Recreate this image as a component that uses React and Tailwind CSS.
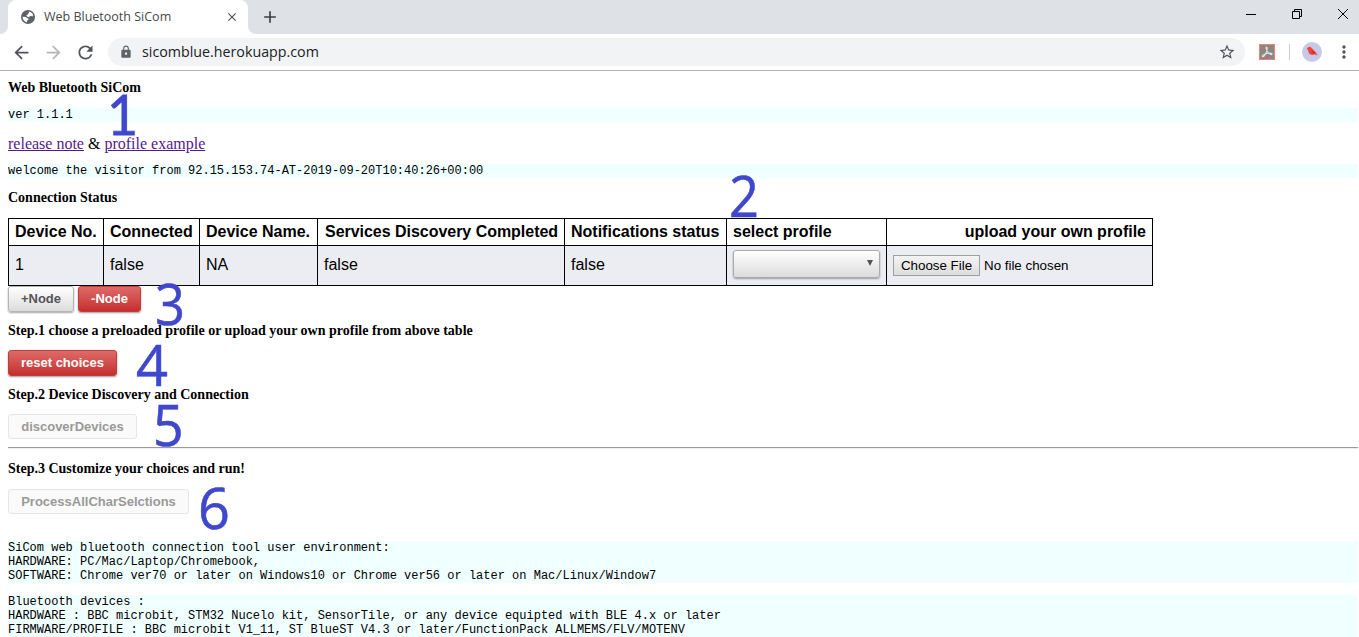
import React from "react";
import { MdArrowBack, MdArrowForward, MdRefresh, MdLock, MdStarBorder, MdMoreVert, MdClose, MdAdd } from "react-icons/md";

const ui = "font-['Open_Sans','Noto_Sans',sans-serif]";
const pre = "bg-[#f0ffff] font-['Liberation_Mono',monospace] text-[12px] leading-[14px] text-black whitespace-pre";
const heading = "h-[16px] pt-px text-[14px] leading-[16px] font-bold";
const redBtn =
  "rounded-[3px] border border-[#c43c35] bg-linear-to-b from-[#dd6a6a] to-[#c42d2d] pb-[2px] text-white font-bold shadow-[0_1px_2px_rgba(0,0,0,0.4)] text-[13px] leading-none";
const offBtn =
  "h-[25px] rounded-[3px] border border-[#e6e6e6] bg-[#fafafa] text-[#999999] font-bold text-[13px] leading-none";

function Globe() {
  return (
    <svg width="14" height="14" viewBox="0 0 14 14" className="shrink-0">
      <circle cx="7" cy="7" r="7" fill="#5f6368" />
      <path d="M7.8 1.6C9.8 1.8 11.6 3.300 12.200 5.100L11.300 6.600L9.800 5.800L8.600 6.200L8.200 7.200L6.400 6.800L5.300 5.600L6.200 4.800L6.800 4.900L6.800 3.700L8 3.100Z" fill="#fff" />
      <path d="M1.500 6.700L4.900 7.100L6.300 8.300L7.600 8.600L7.200 10.100L6.100 10.600L5.900 12.300C3.500 11.800 1.600 9.700 1.500 6.700Z" fill="#fff" />
    </svg>
  );
}

function Browser() {
  return (
    <header className={`${ui} h-[71px] border-b border-[#b0b0b0] bg-white`}>
      <div className="flex h-[34px] bg-[#dee1e6]">
        <div className="flex w-2 items-end bg-white">
          <div className="h-[34px] w-2 rounded-br-lg bg-[#dee1e6]" />
        </div>
        <div className="bg-white">
          <div className="h-[34px] bg-[#dee1e6]">
            <div className="flex h-[34px] w-[240px] items-center rounded-t-lg bg-white pl-[13px] pr-[9px]">
              <Globe />
              <span className="ml-[9px] flex-1 pt-px whitespace-nowrap text-[12.5px] text-[#45494d]">Web Bluetooth SiCom</span>
              <MdClose size={14} className="text-[#4f5358]" />
            </div>
          </div>
        </div>
        <div className="flex w-2 bg-white">
          <div className="h-[34px] w-2 rounded-bl-lg bg-[#dee1e6]" />
        </div>
        <div className="flex w-7 items-center justify-center">
          <MdAdd size={20} className="text-[#3c4043]" />
        </div>
        <div className="ml-auto flex">
          <div className="flex w-[46px] justify-center pt-[14px]">
            <div className="h-px w-[10px] bg-black" />
          </div>
          <div className="flex w-[46px] justify-center pt-[9px]">
            <svg width="10" height="10" viewBox="0 0 10 10" fill="none" stroke="#000">
              <path d="M.5 2.500h7v7h-7zM2.500 2.500v-2h7v7h-2" />
            </svg>
          </div>
          <div className="flex w-[39px] pt-[9px] pl-[18px]">
            <svg width="10" height="10" viewBox="0 0 10 10" fill="none" stroke="#000">
              <path d="M0 0L10 10M10 0L0 10" />
            </svg>
          </div>
        </div>
      </div>
      <div className="flex h-[36px] items-center bg-white">
        <MdArrowBack size={21} className="ml-[11px] text-[#505459]" />
        <MdArrowForward size={21} className="ml-[11px] text-[#b4b6b8]" />
        <MdRefresh size={21} className="ml-[11px] text-[#505459]" />
        <div className="ml-3 flex h-7 w-[1137px] items-center rounded-full bg-[#f1f3f4]">
          <MdLock size={14} className="ml-[11px] text-[#5f6368]" />
          <span className="ml-[9px] whitespace-nowrap text-[14.25px] text-[#202124]">sicomblue.herokuapp.com</span>
          <MdStarBorder size={18} className="ml-auto mr-[9px] text-[#505459]" />
        </div>
        <svg width="16" height="16" viewBox="0 0 16 16" className="ml-[14px]">
          <rect x=".5" y=".5" width="15" height="15" fill="#8c8583" stroke="#ef8470" />
          <path d="M7.500 3c1.300 0 .5 3.600-.6 6.200-1 2.100-2.500 3.900-3.400 3.300-1-.9 2.600-3 5.500-3.400 2.500-.3 4.400.3 4 1.200-.6 1-3.400-.8-4.700-3C7.300 5.500 6.600 3 7.500 3z" fill="none" stroke="#e4e2e1" strokeWidth="1.100" />
        </svg>
        <div className="ml-[14px] h-4 w-px bg-[#c8cacd]" />
        <svg width="20" height="20" viewBox="0 0 20 20" className="ml-3">
          <circle cx="10" cy="10" r="10" fill="#c5cae9" />
          <path d="M4.500 7.200L6 5.200Q8 4.200 10 6.200L14 10.500L15.500 13.500L12.500 12.300L11 13Q6.800 13 6.200 9L5.900 7.600Z" fill="#f44336" />
          <path d="M9.500 8L13.500 11.600L11 11.200Z" fill="#b71c3c" />
        </svg>
        <MdMoreVert size={20} className="ml-3 text-[#505459]" />
      </div>
    </header>
  );
}

const th = "border-r border-b border-black p-0 px-[6px] text-left align-middle";
const td = "border-r border-b border-black bg-[#ecedf2] p-0 px-[6px] pb-[2px] align-middle";

function StatusTable() {
  return (
    <table className="w-[1145px] table-fixed border-separate border-spacing-0 border-t border-l border-black font-['Liberation_Sans',Arial,sans-serif] text-[16px] leading-[18px] whitespace-nowrap">
      <colgroup>
        <col className="w-[95px]" />
        <col className="w-[96px]" />
        <col className="w-[118px]" />
        <col className="w-[247px]" />
        <col className="w-[162px]" />
        <col className="w-[160px]" />
        <col className="w-[266px]" />
      </colgroup>
      <thead>
        <tr className="h-[27px]">
          <th className={th}>Device No.</th>
          <th className={th}>Connected</th>
          <th className={th}>Device Name.</th>
          <th className={`${th} pl-[7px] tracking-[-0.03px]`}>Services Discovery Completed</th>
          <th className={th}>Notifications status</th>
          <th className={th}>select profile</th>
          <th className="border-r border-b border-black p-0 px-[6px] text-right align-middle">upload your own profile</th>
        </tr>
      </thead>
      <tbody>
        <tr className="h-[40px]">
          <td className={td}>1</td>
          <td className={td}>false</td>
          <td className={td}>NA</td>
          <td className={td}>false</td>
          <td className={td}>false</td>
          <td className="border-r border-b border-black bg-[#ecedf2] p-0 px-[6px] pb-[3px] align-middle">
            <div className="flex h-[28px] w-[147px] items-start justify-end rounded-[3px] border border-[#aaa] bg-linear-to-b from-white to-[#dcdcdc] pt-[9px] pr-[6px] shadow-[0_1px_2px_rgba(0,0,0,0.35)]">
              <svg width="6" height="6" viewBox="0 0 6 6"><path d="M0 0h6L3 6z" fill="#555" /></svg>
            </div>
          </td>
          <td className="border-r border-b border-black bg-[#ecedf2] p-0 px-[6px] align-middle">
            <div className="flex h-[21px] items-center text-[13.333px] leading-[15px]">
              <button className="h-[21px] w-[87px] border border-[#a0a0a0] bg-linear-to-b from-[#f4f4f4] to-[#dddddd]">Choose File</button>
              <span className="ml-1">No file chosen</span>
            </div>
          </td>
        </tr>
      </tbody>
    </table>
  );
}

function Mark({ className, children }) {
  return (
    <span className={`absolute origin-left text-[57px] leading-[57px] text-[#3f48cc] ${className}`}>{children}</span>
  );
}

export default function App() {
  return (
    <div className="relative h-[637px] w-[1359px] overflow-hidden bg-white font-['Liberation_Serif',serif] text-black">
      <Browser />
      <main className="pr-px pl-2">
        <h1 className={`${heading} mt-[8px]`}>Web Bluetooth SiCom</h1>
        <pre className={`${pre} mt-[13px]`}>ver 1.1.1</pre>
        <p className="mt-3 h-[18px] pt-px text-[16px] leading-[18px]">
          <a className="text-[#551a8b] underline">release note</a> &amp; <a className="text-[#551a8b] underline">profile example</a>
        </p>
        <pre className={`${pre} mt-3`}>welcome the visitor from 92.15.153.74-AT-2019-09-20T10:40:26+00:00</pre>
        <h2 className={`${heading} mt-[11px] mb-[13px]`}>Connection Status</h2>
        <StatusTable />
        <div className="flex gap-1 font-['Liberation_Sans',Arial,sans-serif]">
          <button className="h-[26px] w-[66px] rounded-[3px] border border-[#b5b5b5] bg-linear-to-b from-white to-[#dcdcdc] pb-[2px] text-[13px] leading-none font-bold text-[#555] shadow-[0_1px_2px_rgba(0,0,0,0.35)]">+Node</button>
          <button className={`${redBtn} h-[26px] w-[63px]`}>-Node</button>
        </div>
        <h3 className={`${heading} mt-[10px]`}>Step.1 choose a preloaded profile or upload your own profile from above table</h3>
        <div className="mt-3 flex font-['Liberation_Sans',Arial,sans-serif]">
          <button className={`${redBtn} h-[26px] w-[109px]`}>reset choices</button>
        </div>
        <h3 className={`${heading} mt-[10px]`}>Step.2 Device Discovery and Connection</h3>
        <div className="mt-3 flex font-['Liberation_Sans',Arial,sans-serif]">
          <button className={`${offBtn} w-[129px]`}>discoverDevices</button>
        </div>
        <hr className="mt-2 h-[2px] border-t border-b border-t-[#9a9a9a] border-b-[#eeeeee]" />
        <h3 className={`${heading} mt-[11px]`}>Step.3 Customize your choices and run!</h3>
        <div className="mt-[13px] flex font-['Liberation_Sans',Arial,sans-serif]">
          <button className={`${offBtn} w-[181px]`}>ProcessAllCharSelctions</button>
        </div>
        <pre className={`${pre} mt-[27px]`}>{`SiCom web bluetooth connection tool user environment:
HARDWARE: PC/Mac/Laptop/Chromebook,
SOFTWARE: Chrome ver70 or later on Windows10 or Chrome ver56 or later on Mac/Linux/Window7`}</pre>
        <pre className={`${pre} mt-3`}>{`Bluetooth devices :
HARDWARE : BBC microbit, STM32 Nucelo kit, SensorTile, or any device equipted with BLE 4.x or later
FIRMWARE/PROFILE : BBC microbit V1_11, ST BlueST V4.3 or later/FunctionPack ALLMEMS/FLV/MOTENV`}</pre>
      </main>
      <Mark className="top-[85px] left-[107px] scale-x-[0.94] font-['Lato',sans-serif] [-webkit-text-stroke:0.8px_#3f48cc]">1</Mark>
      <Mark className="top-[167px] left-[729px] scale-x-[0.92] font-['Open_Sans',sans-serif] [-webkit-text-stroke:0.6px_#3f48cc]">2</Mark>
      <Mark className="top-[275px] left-[155px] scale-x-[0.92] font-['Open_Sans',sans-serif] [-webkit-text-stroke:0.6px_#3f48cc]">3</Mark>
      <Mark className="top-[336px] left-[136px] scale-x-[0.98] font-['Open_Sans',sans-serif] [-webkit-text-stroke:0.6px_#3f48cc]">4</Mark>
      <Mark className="top-[396px] left-[153px] scale-x-[0.94] font-['Open_Sans',sans-serif] [-webkit-text-stroke:0.6px_#3f48cc]">5</Mark>
      <Mark className="top-[479px] left-[198px] scale-x-[0.98] font-['Open_Sans',sans-serif] [-webkit-text-stroke:0.6px_#3f48cc]">6</Mark>
    </div>
  );
}
